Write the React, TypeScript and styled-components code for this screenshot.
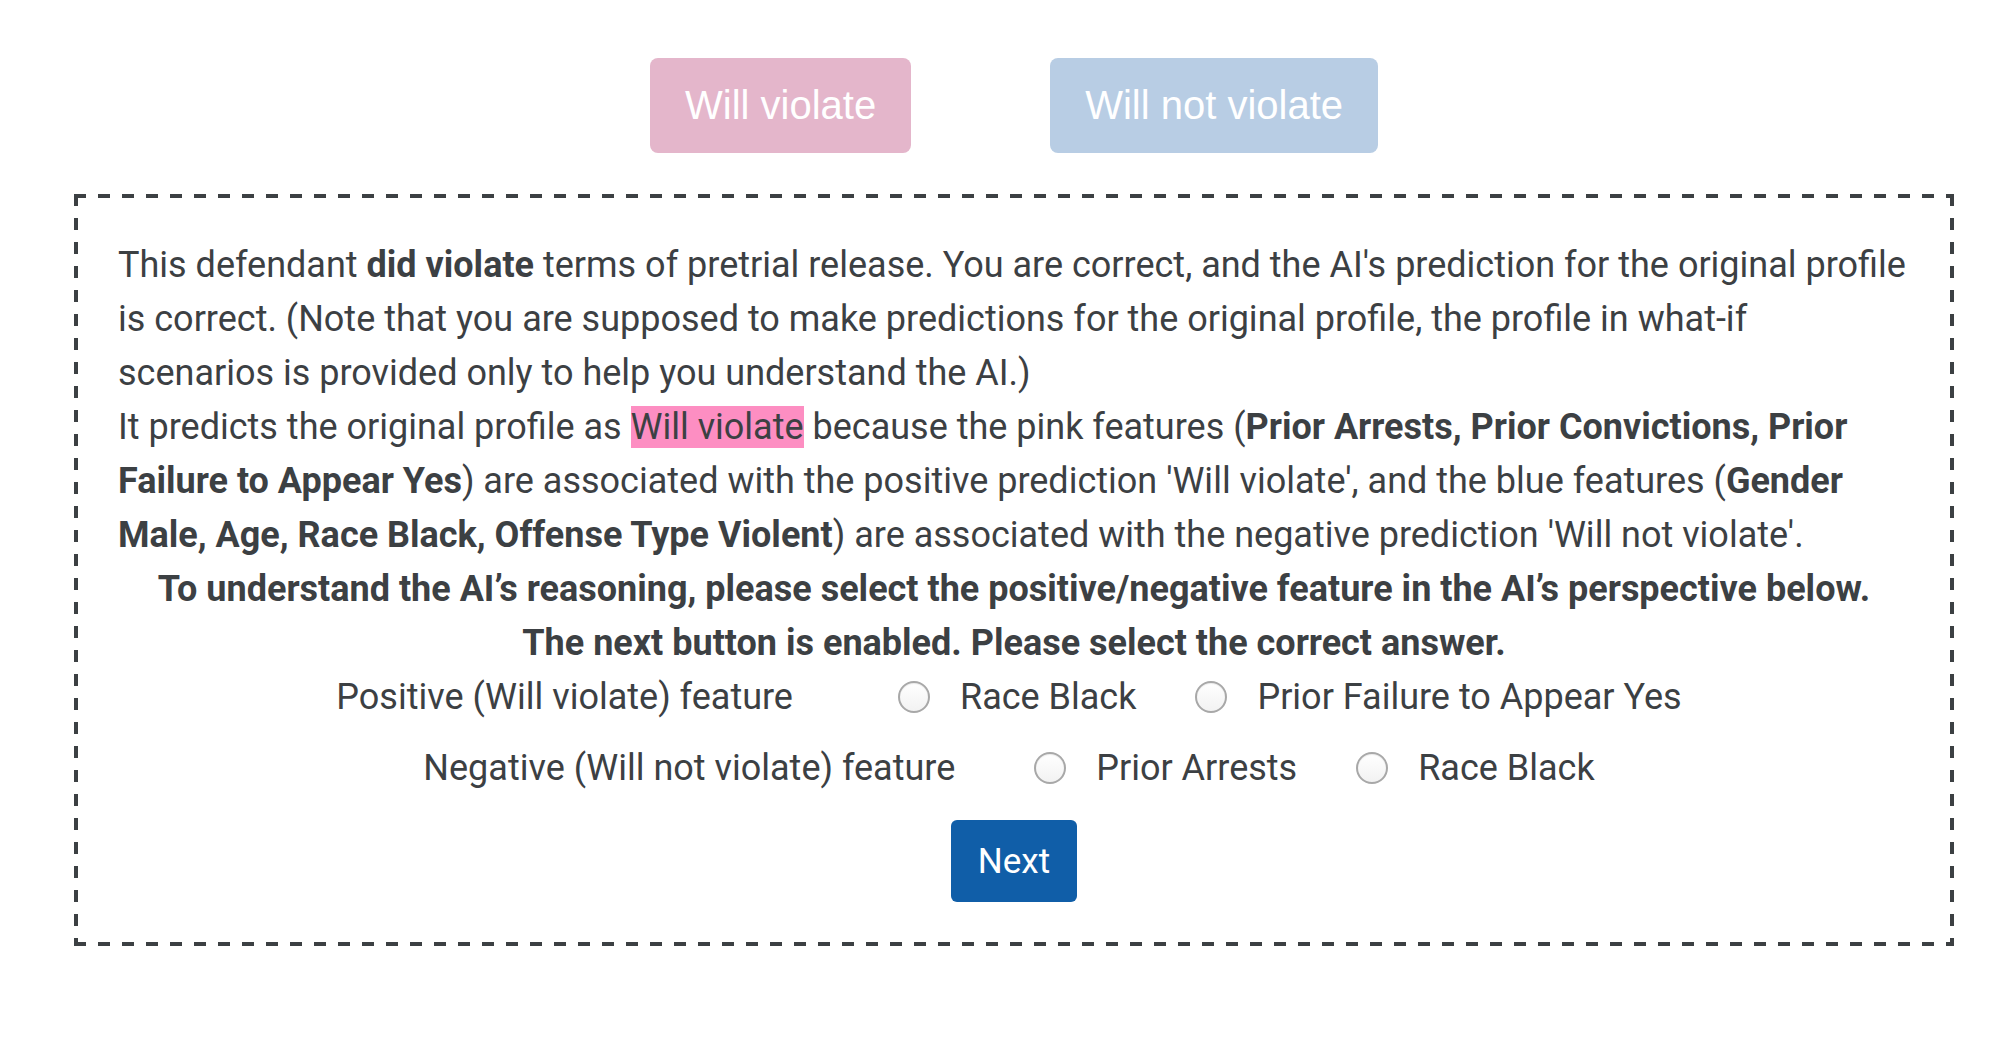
import React from "react";
import styled, { createGlobalStyle } from "styled-components";

const GlobalStyle = createGlobalStyle`
  html, body {
    margin: 0;
    padding: 0;
    background: #ffffff;
  }
  body {
    font-family: Roboto, "Noto Sans", "Liberation Sans", sans-serif;
    color: #3c4043;
  }
`;

const Page = styled.div`
  width: 1880px;
  margin-left: 74px;
  padding-top: 58px;
`;

const ChoiceBar = styled.div`
  display: flex;
  justify-content: center;
  gap: 139px;
  margin-bottom: 41px;
`;

const ChoiceButton = styled.button<{ $tone: "pink" | "blue" }>`
  height: 95px;
  padding: 0 35px;
  border: none;
  border-radius: 8px;
  background: ${(p) => (p.$tone === "pink" ? "#e4b6cb" : "#b8cde4")};
  color: #ffffff;
  font-family: "Liberation Sans", Arial, sans-serif;
  font-size: 40px;
  cursor: default;
`;

const dashH = "repeating-linear-gradient(90deg, #3c4043 0 12px, transparent 12px 24px)";
const dashV = "repeating-linear-gradient(180deg, #3c4043 0 12px, transparent 12px 24px)";

const FeedbackBox = styled.div`
  padding: 44px;
  background:
    ${dashH} left top / 100% 4px no-repeat,
    ${dashH} left bottom / 100% 4px no-repeat,
    ${dashV} left top / 4px 100% no-repeat,
    ${dashV} right top / 4px 100% no-repeat;
`;

const Paragraph = styled.div`
  font-size: 36px;
  line-height: 54px;
`;

const Highlight = styled.span`
  background: #fd8ec2;
`;

const Instruction = styled.div`
  font-size: 36px;
  line-height: 54px;
  font-weight: 700;
  text-align: center;
`;

const FeatureRow = styled.div<{ $last?: boolean }>`
  display: flex;
  justify-content: center;
  align-items: center;
  height: 54px;
  margin-bottom: ${(p) => (p.$last ? "25px" : "17px")};
  font-size: 36px;
`;

const FeatureLabel = styled.span<{ $space: number }>`
  margin-right: ${(p) => p.$space}px;
`;

const Options = styled.div`
  display: flex;
  gap: 49px;
`;

const Option = styled.label`
  display: flex;
  align-items: center;
  gap: 30px;
  margin-right: 10px;
`;

const Radio = styled.input.attrs({ type: "radio" })`
  appearance: none;
  margin: 0;
  width: 32px;
  height: 32px;
  border-radius: 50%;
  border: 2px solid #a8a8a8;
  background: linear-gradient(#ffffff, #f2f2f2);
  box-shadow: inset 0 1px 1px rgba(0, 0, 0, 0.08);
`;

const NextRow = styled.div`
  display: flex;
  justify-content: center;
`;

const NextButton = styled.button`
  height: 82px;
  padding: 0 27px;
  border: none;
  border-radius: 6px;
  background: #105ea8;
  color: #ffffff;
  font-family: Roboto, sans-serif;
  font-size: 35px;
`;

const rows = [
  {
    label: "Positive (Will violate) feature",
    space: 105,
    name: "positive",
    options: ["Race Black", "Prior Failure to Appear Yes"],
  },
  {
    label: "Negative (Will not violate) feature",
    space: 79,
    name: "negative",
    options: ["Prior Arrests", "Race Black"],
  },
];

export default function App() {
  return (
    <>
      <GlobalStyle />
      <Page>
        <ChoiceBar>
          <ChoiceButton $tone="pink">Will violate</ChoiceButton>
          <ChoiceButton $tone="blue">Will not violate</ChoiceButton>
        </ChoiceBar>
        <FeedbackBox>
          <Paragraph>
            This defendant <b>did violate</b> terms of pretrial release. You are
            correct, and the AI's prediction for the original profile is correct.
            (Note that you are supposed to make predictions for the original
            profile, the profile in what-if scenarios is provided only to help you
            understand the AI.)
            <br />
            It predicts the original profile as <Highlight>Will violate</Highlight>{" "}
            because the pink features (
            <b>Prior Arrests, Prior Convictions, Prior Failure to Appear Yes</b>)
            are associated with the positive prediction 'Will violate', and the
            blue features (<b>Gender Male, Age, Race Black, Offense Type Violent</b>)
            are associated with the negative prediction 'Will not violate'.
          </Paragraph>
          <Instruction>
            To understand the AI’s reasoning, please select the positive/negative
            feature in the AI’s perspective below.
          </Instruction>
          <Instruction>The next button is enabled. Please select the correct answer.</Instruction>
          {rows.map((row, i) => (
            <FeatureRow key={row.name} $last={i === rows.length - 1}>
              <FeatureLabel $space={row.space}>{row.label}</FeatureLabel>
              <Options>
                {row.options.map((opt) => (
                  <Option key={opt}>
                    <Radio name={row.name} />
                    {opt}
                  </Option>
                ))}
              </Options>
            </FeatureRow>
          ))}
          <NextRow>
            <NextButton>Next</NextButton>
          </NextRow>
        </FeedbackBox>
      </Page>
    </>
  );
}
